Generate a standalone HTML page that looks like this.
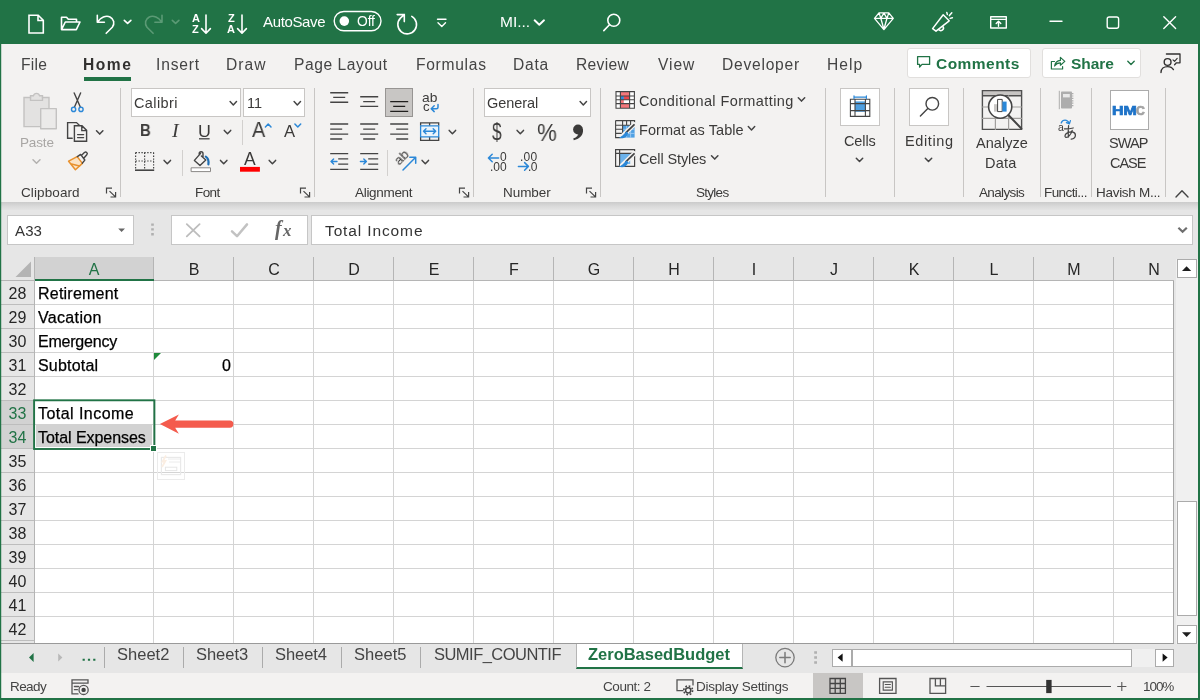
<!DOCTYPE html>
<html><head><meta charset="utf-8"><title>Excel</title>
<style>
*{box-sizing:border-box;margin:0;padding:0}
html,body{width:1200px;height:700px;overflow:hidden;background:#e6e6e6}
body{font-family:"Liberation Sans",sans-serif;color:#333;position:relative}
.a{position:absolute}
.t{position:absolute;white-space:nowrap;line-height:1;will-change:transform}
svg{position:absolute;overflow:visible}
#title{left:0;top:0;width:1200px;height:44px;background:#217346}
#tabs{left:0;top:44px;width:1200px;height:41px;background:#f3f2f1}
#ribbon{left:0;top:85px;width:1200px;height:117px;background:#f3f2f1}
#shadow{left:0;top:202px;width:1200px;height:9px;background:linear-gradient(#cbcbcb,#d9d9d9 45%,#e6e6e6)}
.tab{font-size:16.5px;color:#444;top:13px}
.gl{font-size:13.5px;color:#444;top:101px}
.sep{position:absolute;top:6px;width:1px;height:100px;background:#d2d0ce}
.rt{font-size:14.5px;color:#333}
</style></head><body>
<div id="title" class="a">
<svg style="left:0;top:0" width="1200" height="44" viewBox="0 0 1200 44" fill="none" stroke="#fff" stroke-width="1.6" stroke-linecap="round" stroke-linejoin="round">
<!-- new doc -->
<path d="M29 15.2H38.2L43.3 20.3V33H29Z M38 15.4V20.5H43" stroke-linejoin="miter"/>
<!-- open folder -->
<path d="M61.5 29.6V17.2H66.5L68.3 19.3H76.5V22 M61.5 29.6L65.3 22H80L76.3 29.6Z"/>
<!-- undo -->
<path d="M97.3 15.2V22.3H104.4 M97.6 22C100.5 17.5 106 15 110 17C114 19 115 23.5 112.3 27.2L106.2 33.3"/>
<path d="M124.3 20.3L127.6 23.4L130.9 20.3" stroke-width="1.6"/>
<!-- redo faded -->
<g stroke="#5b9a75"><path d="M162 15.2V22.3H154.9 M161.7 22C158.8 17.5 153.3 15 149.3 17C145.3 19 144.3 23.5 147 27.2L153.1 33.3"/>
<path d="M172.3 20.3L175.6 23.4L178.9 20.3" stroke-width="1.6"/></g>
<!-- AZ sort -->
<path d="M206 15V33 M201.6 28.6L206 33.2L210.4 28.6"/>
<path d="M242 15V33 M237.6 28.6L242 33.2L246.4 28.6"/>
<!-- autosave toggle -->
<rect x="334.2" y="11.5" width="46.8" height="19.2" rx="9.6" stroke-width="1.4"/>
<circle cx="344.3" cy="21.1" r="4.8" fill="#fff" stroke="none"/>
<!-- refresh -->
<path d="M411.8 16.4A9.35 9.35 0 1 1 400.4 18.1L404.3 14.6 M397.2 14.6H404.3V21.6" stroke-linejoin="miter"/>
<!-- qat customize -->
<path d="M437.5 19.2H446 M438 22.8L441.8 26.4L445.5 22.8" stroke-width="1.4"/>
<!-- MI chevron -->
<path d="M534.6 20.3L539.3 24.8L544 20.3" stroke-width="1.9"/>
<!-- search -->
<circle cx="613.8" cy="20.3" r="6" /><path d="M609.5 24.7L603.8 30.6"/>
<!-- diamond -->
<path d="M874.5 18.3L879 12.9H888.8L893.3 18.3L883.9 29.6Z M874.5 18.3H893.3 M879 12.9L880.8 18.3L883.9 29.3L887 18.3L888.8 12.9 M880.8 18.3L883.9 13L887 18.3" stroke-width="1.3"/>
<!-- megaphone -->
<path d="M932.6 28.6L943.2 14.8L949.2 20.8L936 31.2Z M938.8 29.4A2.3 2.3 0 0 0 943 26.6 M946.8 12.4L947.3 14.4 M949.4 15.6L951.8 12.8 M950.2 18.4L952.4 17.8" stroke-width="1.5"/>
<!-- ribbon display -->
<path d="M990.7 16.7H1006.3V28H990.7Z M990.7 19.4H1006.3 M998.5 26.3V21.6 M996.2 23.6L998.5 21.3L1000.8 23.6" stroke-width="1.4"/>
<!-- min max close -->
<path d="M1050 21.2H1062" stroke-width="1.4"/>
<rect x="1107.2" y="17" width="11.4" height="11.2" rx="2" stroke-width="1.4"/>
<path d="M1163.8 16.8L1175.6 28.4 M1175.6 16.8L1163.8 28.4" stroke-width="1.4"/>
</svg>
<span class="t" style="left:191.6px;top:13.2px;font-size:11px;font-weight:bold;color:#fff">A</span>
<span class="t" style="left:192.2px;top:23.7px;font-size:11px;font-weight:bold;color:#fff">Z</span>
<span class="t" style="left:227.6px;top:13.2px;font-size:11px;font-weight:bold;color:#fff">Z</span>
<span class="t" style="left:227.2px;top:23.7px;font-size:11px;font-weight:bold;color:#fff">A</span>
<span class="t" style="left:263px;top:13.6px;font-size:15px;color:#fff;letter-spacing:-0.35px">AutoSave</span>
<span class="t" style="left:357px;top:15px;font-size:13.8px;color:#fff;letter-spacing:-0.1px">Off</span>
<span class="t" style="left:499.5px;top:13.8px;font-size:15.5px;color:#fff">MI...</span>
</div>
<div id="tabs" class="a">
<span class="t" style="left:21.25px;top:12.99px;font-size:15.6px;color:#444;letter-spacing:0.250px;">File</span>
<span class="t" style="left:82.50px;top:12.99px;font-size:15.6px;color:#323130;letter-spacing:1.542px;font-weight:bold;">Home</span>
<div class="a" style="left:83.5px;top:33px;width:47px;height:3.8px;background:#217346"></div>
<span class="t" style="left:156.12px;top:12.99px;font-size:15.6px;color:#444;letter-spacing:0.835px;">Insert</span>
<span class="t" style="left:226.25px;top:12.99px;font-size:15.6px;color:#444;letter-spacing:1.017px;">Draw</span>
<span class="t" style="left:294.25px;top:12.99px;font-size:15.6px;color:#444;letter-spacing:0.562px;">Page Layout</span>
<span class="t" style="left:415.55px;top:12.99px;font-size:15.6px;color:#444;letter-spacing:0.707px;">Formulas</span>
<span class="t" style="left:512.55px;top:12.99px;font-size:15.6px;color:#444;letter-spacing:0.775px;">Data</span>
<span class="t" style="left:576.25px;top:12.99px;font-size:15.6px;color:#444;letter-spacing:0.335px;">Review</span>
<span class="t" style="left:657.88px;top:12.99px;font-size:15.6px;color:#444;letter-spacing:0.933px;">View</span>
<span class="t" style="left:721.75px;top:12.99px;font-size:15.6px;color:#444;letter-spacing:0.756px;">Developer</span>
<span class="t" style="left:826.75px;top:12.99px;font-size:15.6px;color:#444;letter-spacing:1.017px;">Help</span>
<div class="a" style="left:907px;top:4px;width:123.5px;height:29.5px;background:#fff;border:1px solid #e1dfdd;border-radius:3px"></div>
<div class="a" style="left:1042px;top:4px;width:99px;height:29.5px;background:#fff;border:1px solid #e1dfdd;border-radius:3px"></div>
<span class="t" style="left:935.88px;top:11.78px;font-size:15.5px;color:#217346;letter-spacing:0.461px;font-weight:bold;">Comments</span>
<span class="t" style="left:1071.10px;top:11.78px;font-size:15.5px;color:#217346;letter-spacing:-0.056px;font-weight:bold;">Share</span>
<svg style="left:0;top:0" width="1200" height="41" viewBox="0 44 1200 41" fill="none" stroke-linecap="round" stroke-linejoin="round">
<path d="M917.6 56.6H929.6V64.4H922L919.6 67V64.4H917.6Z" stroke="#217346" stroke-width="1.3"/>
<path d="M1054.5 61.5H1051.4V69H1062.6V66.6 M1054.6 66C1055.2 62.6 1057.6 60.6 1060.4 60.4V57.4L1064.8 61.4L1060.4 65.2V62.8C1058 62.8 1056 63.8 1054.6 66Z" stroke="#217346" stroke-width="1.2"/>
<path d="M1127.8 61.2L1131 64.4L1134.2 61.2" stroke="#217346" stroke-width="1.4"/>
<circle cx="1167.6" cy="62" r="3.4" stroke="#323130" stroke-width="1.4"/><path d="M1161 72.6C1161 68.6 1164 66.6 1167.6 66.6C1170.4 66.6 1172.4 67.8 1173.4 69.6" stroke="#323130" stroke-width="1.4"/><path d="M1166.4 54H1180V62.8H1176.4L1174.6 64.8" stroke="#323130" stroke-width="1.3"/><path d="M1173 59.8L1174.6 61.4L1177.2 58.4" stroke="#323130" stroke-width="1.1"/>
</svg>
</div>
<div id="ribbon" class="a">
<div class="a" style="left:131px;top:3px;width:110px;height:29px;background:#fff;border:1px solid #c8c6c4"></div>
<div class="a" style="left:243px;top:3px;width:62px;height:29px;background:#fff;border:1px solid #c8c6c4"></div>
<div class="a" style="left:385px;top:3px;width:28px;height:29px;background:#c8c6c4;border:1px solid #979593"></div>
<div class="a" style="left:484px;top:3px;width:107px;height:29px;background:#fff;border:1px solid #c8c6c4"></div>
<div class="a" style="left:840px;top:3px;width:40px;height:38px;background:#fff;border:1px solid #c8c6c4"></div>
<div class="a" style="left:909px;top:3px;width:40px;height:38px;background:#fff;border:1px solid #c8c6c4"></div>
<div class="a" style="left:1109.5px;top:5px;width:39.5px;height:39.5px;background:#fff;border:1px solid #ababab"></div>
<div class="a" style="left:120.0px;top:3px;width:1px;height:109px;background:#c8c6c4"></div>
<div class="a" style="left:314.0px;top:3px;width:1px;height:109px;background:#c8c6c4"></div>
<div class="a" style="left:473.0px;top:3px;width:1px;height:109px;background:#c8c6c4"></div>
<div class="a" style="left:600.0px;top:3px;width:1px;height:109px;background:#c8c6c4"></div>
<div class="a" style="left:825.0px;top:3px;width:1px;height:109px;background:#c8c6c4"></div>
<div class="a" style="left:894.0px;top:3px;width:1px;height:109px;background:#c8c6c4"></div>
<div class="a" style="left:963.0px;top:3px;width:1px;height:109px;background:#c8c6c4"></div>
<div class="a" style="left:1040.0px;top:3px;width:1px;height:109px;background:#c8c6c4"></div>
<div class="a" style="left:1091.0px;top:3px;width:1px;height:109px;background:#c8c6c4"></div>
<div class="a" style="left:1165.0px;top:3px;width:1px;height:109px;background:#c8c6c4"></div>
<div class="a" style="left:241.5px;top:34.5px;width:1px;height:25.5px;background:#d2d0ce"></div>
<div class="a" style="left:182.0px;top:64.5px;width:1px;height:26.5px;background:#d2d0ce"></div>
<div class="a" style="left:387.0px;top:64.5px;width:1px;height:26.5px;background:#d2d0ce"></div>
<svg style="left:0;top:0" width="1200" height="118" viewBox="0 85 1200 118" fill="none" stroke-linecap="round" stroke-linejoin="round">
<path d="M24 97.5H30.5V95.8H33.4A3.2 3.2 0 0 1 39.6 95.8H42.5V97.5H49V126.6H24Z" fill="#e3e2e1" stroke="#c3c2c1" stroke-width="1.4" stroke-linejoin="miter"/>
<path d="M30.5 97.5V100.4H42.5V97.5" stroke="#c3c2c1" stroke-width="1.4"/>
<rect x="40.7" y="108.6" width="15.6" height="20.2" fill="#ebeae9" stroke="#c3c2c1" stroke-width="1.4"/>
<path d="M33.0 159.79999999999998L36.5 163.2L40.0 159.79999999999998" stroke="#b3b1af" stroke-width="1.5"/>
<path d="M74.2 93L80.2 106.8 M80.6 93L74.6 106.8" stroke="#444" stroke-width="1.4"/>
<circle cx="73.6" cy="109.4" r="2.1" stroke="#2b88d8" stroke-width="1.4"/><circle cx="81" cy="109.4" r="2.1" stroke="#2b88d8" stroke-width="1.4"/>
<path d="M72.2 138.2H67.6V122.6H76.5L79.3 125.2" stroke="#444" stroke-width="1.4" stroke-linejoin="miter"/>
<path d="M74.4 125.8H82L86.6 130.4V141.2H74.4Z M81.8 126V130.6H86.4 M77.6 134.6H83.6 M77.6 137.6H83.6" stroke="#444" stroke-width="1.4" stroke-linejoin="miter"/>
<path d="M96.5 130.79999999999998L99.7 134.1L102.9 130.79999999999998" stroke="#444" stroke-width="1.5"/>
<path d="M68.6 161.2L77.2 156.6L82.4 163.4L75.4 169.8Z" fill="#fbe3c5" stroke="#e8912d" stroke-width="1.5"/>
<path d="M71.5 164L79.5 166" stroke="#e8912d" stroke-width="1.3"/>
<path d="M77.4 156.6L80.6 154.4L84.8 160L82.4 163.2 M81.6 155.2L84.4 152.6A1.6 1.6 0 0 1 86.8 154.8L84.2 157.8" stroke="#444" stroke-width="1.4"/>
<path d="M106.5 193.6V188.1H112 M109.5 191.1L115.5 196.9 M115.6 191.9V197.0H110.5" stroke="#444" stroke-width="1.2" stroke-linecap="butt" stroke-linejoin="miter"/>
<path d="M230.10000000000002 101.60000000000001L233.3 104.9L236.50000000000003 101.60000000000001" stroke="#444" stroke-width="1.5"/>
<path d="M294.1 101.60000000000001L297.3 104.9L300.5 101.60000000000001" stroke="#444" stroke-width="1.5"/>
<path d="M199 138.8H209.6" stroke="#444" stroke-width="1.3" stroke-linecap="butt"/>
<path d="M224.3 130.39999999999998L227.5 133.7L230.70000000000002 130.39999999999998" stroke="#444" stroke-width="1.5"/>
<path d="M265.4 127L268.2 124L271 127" stroke="#2b88d8" stroke-width="1.5"/>
<path d="M294.9 124L297.8 127L300.7 124" stroke="#2b88d8" stroke-width="1.5"/>
<path d="M135.6 152.6H153.6 M135.6 161H153.6 M135.6 152.6V169 M144.6 152.6V169 M153.6 152.6V169" stroke="#444" stroke-width="1.2" stroke-dasharray="1.4 1.5" stroke-linecap="butt"/>
<path d="M135 170.2H154.2" stroke="#444" stroke-width="1.6" stroke-linecap="butt"/>
<path d="M164.10000000000002 160.39999999999998L167.3 163.7L170.50000000000003 160.39999999999998" stroke="#444" stroke-width="1.5"/>
<path d="M200.6 153.4L194.4 160.4L200 165.4L205.8 160L201.4 156 M199.2 155V153.6A1.9 1.9 0 0 1 203 153.6V157.4" stroke="#444" stroke-width="1.4"/>
<path d="M205.8 156.6C208.2 158 208.8 161 208.4 164.4" stroke="#1f6fb5" stroke-width="2.2"/>
<rect x="191.5" y="167.8" width="19" height="3.8" fill="#fff" stroke="#8a8886" stroke-width="1"/>
<path d="M220.5 160.39999999999998L223.7 163.7L226.9 160.39999999999998" stroke="#444" stroke-width="1.5"/>
<rect x="240" y="166.9" width="19.9" height="4.8" fill="#ff0000"/>
<path d="M269.2 160.39999999999998L272.4 163.7L275.59999999999997 160.39999999999998" stroke="#444" stroke-width="1.5"/>
<path d="M300.5 193.6V188.1H306 M303.5 191.1L309.5 196.9 M309.6 191.9V197.0H304.5" stroke="#444" stroke-width="1.2" stroke-linecap="butt" stroke-linejoin="miter"/>
<path d="M330.2 92.8H348.2 M333.2 97.4H345.2 M330.2 102.2H348.2 " stroke="#444" stroke-width="1.4" stroke-linecap="butt"/>
<path d="M360.2 96.8H378.2 M363.2 101.6H375.2 M360.2 106.4H378.2 " stroke="#444" stroke-width="1.4" stroke-linecap="butt"/>
<path d="M390.2 101.6H408.2 M393.2 106.4H405.2 M390.2 111.4H408.2 " stroke="#201f1e" stroke-width="1.4" stroke-linecap="butt"/>
<path d="M330.2 124H348.2 M330.2 129.1H342.2 M330.2 134.1H348.2 M330.2 139H342.2 " stroke="#444" stroke-width="1.4" stroke-linecap="butt"/>
<path d="M360.2 124H378.2 M363.2 129.1H375.2 M360.2 134.1H378.2 M363.2 139H375.2 " stroke="#444" stroke-width="1.4" stroke-linecap="butt"/>
<path d="M390.2 124H408.2 M396.2 129.1H408.2 M390.2 134.1H408.2 M396.2 139H408.2 " stroke="#444" stroke-width="1.4" stroke-linecap="butt"/>
<path d="M330.2 153.6H348.2 M338.2 158.9H348.2 M338.2 164.1H348.2 M330.2 169.4H348.2 " stroke="#444" stroke-width="1.4" stroke-linecap="butt"/>
<path d="M337 161.5H331 M333.6 158.9L331 161.5L333.6 164.1" stroke="#2b88d8" stroke-width="1.4"/>
<path d="M360.2 153.6H378.2 M368.2 158.9H378.2 M368.2 164.1H378.2 M360.2 169.4H378.2 " stroke="#444" stroke-width="1.4" stroke-linecap="butt"/>
<path d="M360.4 161.5H366.4 M363.8 158.9L366.4 161.5L363.8 164.1" stroke="#2b88d8" stroke-width="1.4"/>
<path d="M438 104.5V107.2A1.5 1.5 0 0 1 436.5 108.7H431.4 M434.2 105.8L431.2 108.7L434.2 111.6" stroke="#2b88d8" stroke-width="1.5"/>
<path d="M420.6 125.8V122.9H438.7V125.8 M420.6 136.8V140.3H438.7V136.8 M429.6 122.9V125.8 M429.6 136.8V140.3" stroke="#444" stroke-width="1.3" stroke-linejoin="miter" stroke-linecap="butt"/>
<rect x="420.6" y="125.8" width="18.1" height="11" fill="#eaf4fc" stroke="#2b88d8" stroke-width="1.3"/>
<path d="M423.6 131.3H435.6 M426 128.8L423.5 131.3L426 133.8 M433.2 128.8L435.7 131.3L433.2 133.8" stroke="#2b88d8" stroke-width="1.4"/>
<path d="M449.2 130.39999999999998L452.4 133.7L455.59999999999997 130.39999999999998" stroke="#444" stroke-width="1.5"/>
<path d="M403 170L415.2 157.8 M409.8 157.3H415.7V163.2" stroke="#2b88d8" stroke-width="1.5"/>
<path d="M422.1 160.39999999999998L425.3 163.7L428.5 160.39999999999998" stroke="#444" stroke-width="1.5"/>
<path d="M459.5 193.6V188.1H465 M462.5 191.1L468.5 196.9 M468.6 191.9V197.0H463.5" stroke="#444" stroke-width="1.2" stroke-linecap="butt" stroke-linejoin="miter"/>
<path d="M580.0999999999999 101.60000000000001L583.3 104.9L586.4999999999999 101.60000000000001" stroke="#444" stroke-width="1.5"/>
<path d="M517.0999999999999 130.39999999999998L520.3 133.7L523.4999999999999 130.39999999999998" stroke="#444" stroke-width="1.5"/>
<circle cx="578" cy="129.5" r="4.9" fill="#3b3a39" stroke="none"/><path d="M582.9 129C583.8 134.8 580 138.8 573.8 140.2L573.2 138.4C576.8 137.2 578.8 135 578.4 132.4Z" fill="#3b3a39" stroke="none"/>
<path d="M498.6 158H488.4 M492.2 154.2L488.4 158L492.2 161.8" stroke="#2b88d8" stroke-width="1.5"/>
<path d="M518.4 166.4H528.4 M524.6 162.6L528.4 166.4L524.6 170.2" stroke="#2b88d8" stroke-width="1.5"/>
<path d="M586.5 193.6V188.1H592 M589.5 191.1L595.5 196.9 M595.6 191.9V197.0H590.5" stroke="#444" stroke-width="1.2" stroke-linecap="butt" stroke-linejoin="miter"/>
<rect x="616" y="91.6" width="18.4" height="16.6" fill="#fff" stroke="none"/>
<path d="M620.4 91.8H629.6V96H620.4Z M620.4 103.6H629.6V108H620.4Z M620.4 96H623.8V103.6H620.4Z" fill="#f4777b" stroke="none"/>
<path d="M623.8 96H629.6V99.8H623.8Z" fill="#e8464c" stroke="none"/><path d="M620.4 96H623.8V99.8H620.4Z" fill="#2b88d8" stroke="none"/>
<path d="M616 91.6H634.4V108.2H616Z M620.4 91.6V108.2 M629.6 91.6V108.2 M616 96H634.4 M616 99.8H634.4 M616 103.6H634.4" stroke="#444" stroke-width="1.1" stroke-linejoin="miter"/>
<path d="M798.3 97.8L801.5 101.1L804.6999999999999 97.8" stroke="#444" stroke-width="1.5"/>
<rect x="622.6" y="125.2" width="12" height="12.4" fill="#4fa0e3" stroke="none"/>
<path d="M626.6 125.2V137.6 M630.6 125.2V137.6 M622.6 129.3H634.6 M622.6 133.4H634.6" stroke="#9fcbf0" stroke-width="0.9"/>
<path d="M615.6 120.6H634.6V125.2 M615.6 120.6V137.6H622.6 M622.6 120.6V125.2 M626.6 120.6V125.2 M630.6 120.6V125.2 M615.6 125.2H634.6 M615.6 129.3H622.6 M615.6 133.4H622.6 M622.6 125.2V137.6" stroke="#444" stroke-width="1.1" stroke-linejoin="miter" stroke-linecap="butt"/>
<path d="M634.4 124.4L622 136.4" stroke="#f3f2f1" stroke-width="4.4"/><path d="M634 124.8L626 132.6" stroke="#444" stroke-width="1.8"/><path d="M626.6 131.6C624.6 132.6 623.6 136.2 618.8 137.6C622.4 139.4 627 138 628.2 133.2Z" fill="#2b88d8" stroke="none"/>
<path d="M748.3 126.60000000000001L751.5 129.9L754.6999999999999 126.60000000000001" stroke="#444" stroke-width="1.5"/>
<rect x="619.8" y="153.4" width="10.4" height="10.6" fill="#6db3ec" stroke="none"/>
<path d="M615.6 149.6H634.6V166.4H615.6Z M615.6 153.4H634.6 M619.6 149.6V166.4" stroke="#444" stroke-width="1.2" stroke-linejoin="miter"/>
<path d="M634.4 153.4L622 165.4" stroke="#f3f2f1" stroke-width="4.4"/><path d="M634 153.8L626 161.6" stroke="#444" stroke-width="1.8"/><path d="M626.6 160.6C624.6 161.6 623.6 165.2 618.8 166.6C622.4 168.4 627 167 628.2 162.2Z" fill="#2b88d8" stroke="none"/>
<path d="M711.5 155.79999999999998L714.7 159.1L717.9 155.79999999999998" stroke="#444" stroke-width="1.5"/>
<rect x="855" y="101.4" width="10.4" height="10.4" fill="#4f9fe0" stroke="none"/>
<path d="M850.4 99.2H869.8V116.4H850.4Z M850.4 103.6H869.8 M850.4 110.6H869.8 M855 99.2V116.4 M865.4 99.2V116.4" stroke="#444" stroke-width="1.1" stroke-linejoin="miter"/>
<path d="M854 97.2H866.4 M854 95.8V98.6 M866.4 95.8V98.6" stroke="#2b88d8" stroke-width="1.2"/>
<path d="M856.3 158.2L859.5 161.5L862.6999999999999 158.2" stroke="#444" stroke-width="1.5"/>
<circle cx="932.3" cy="103.8" r="6.3" stroke="#444" stroke-width="1.4"/><path d="M927.8 108.4L920.4 116" stroke="#444" stroke-width="1.4"/>
<path d="M925.3 158.2L928.5 161.5L931.6999999999999 158.2" stroke="#444" stroke-width="1.5"/>
<rect x="982.4" y="90.6" width="39.2" height="5.2" fill="#c8c6c4" stroke="none"/>
<path d="M982.4 90.6H1021.6V129.4H982.4Z M982.4 95.8H1021.6" stroke="#505050" stroke-width="1.4" stroke-linejoin="miter"/>
<path d="M982.4 107H1021.6 M982.4 118.4H1021.6 M995.4 95.8V129.4 M1008.6 95.8V129.4" stroke="#a19f9d" stroke-width="1.2"/>
<circle cx="1000.2" cy="106.6" r="11.6" fill="#fff" stroke="#444" stroke-width="1.6"/>
<rect x="994" y="104.2" width="4" height="7.4" fill="#c8c6c4"/><rect x="998" y="99.4" width="4.2" height="12.2" fill="#fff" stroke="#444" stroke-width="1"/><rect x="1002.4" y="101.6" width="4.2" height="10" fill="#2b88d8"/>
<path d="M1008.6 115.2L1021.4 128.6" stroke="#444" stroke-width="2"/>
<rect x="1061" y="91.4" width="11" height="17.2" rx="0.8" fill="#adadad" stroke="none"/><rect x="1063" y="94" width="6.8" height="3.4" fill="#e9e9e9" stroke="none"/><path d="M1059.3 91.2V108.8" stroke="#adadad" stroke-width="1"/><path d="M1072.6 93V107.4" stroke="#adadad" stroke-width="1.6" stroke-dasharray="1.2 1.2" stroke-linecap="butt"/>
<path d="M1061.2 123C1062.6 119.4 1067.4 119 1069.2 123.4 M1070.4 120.6L1069.4 123.8L1066.4 122.6" stroke="#2b88d8" stroke-width="1.3"/>
<g transform="translate(1063.8 125.4)" stroke="#444" stroke-width="1.25"><path d="M0.6 3.4C3.5 3.6 6.5 3.2 9.4 2.6 M4.8 0.2C4.4 4 4.2 8 4.6 11.6 M8.4 5C7.5 9 4 12.6 2 12C0.5 11.5 1 8.5 4 7.2C7.5 5.8 11.6 6.5 11.6 9.8C11.6 12 9.5 13.4 7.4 13.8"/></g>
<path d="M1176 197L1182 190.8L1188 197" stroke="#444" stroke-width="1.4"/>
</svg>
<span class="t" style="left:19.77px;top:51.07px;font-size:13.5px;color:#a8a6a4;letter-spacing:-0.137px;">Paste</span>
<span class="t" style="left:20.77px;top:100.97px;font-size:13.5px;color:#3b3a39;letter-spacing:0.106px;">Clipboard</span>
<span class="t" style="left:133.85px;top:10.83px;font-size:14.5px;color:#3b3a39;letter-spacing:0.388px;">Calibri</span>
<span class="t" style="left:246.57px;top:10.83px;font-size:14.5px;color:#3b3a39;letter-spacing:-0.050px;">11</span>
<span class="t" style="left:139.67px;top:38.36px;font-size:16px;color:#3b3a39;font-weight:bold;transform:scaleX(0.9316);transform-origin:0 0;">B</span>
<span class="t" style="left:171.54px;top:36.74px;font-size:18.5px;color:#3b3a39;font-style:italic;font-family:'Liberation Serif',serif;transform:scaleX(1.0857);transform-origin:0 0;">I</span>
<span class="t" style="left:197.82px;top:38.19px;font-size:16.2px;color:#3b3a39;transform:scaleX(1.1027);transform-origin:0 0;">U</span>
<span class="t" style="left:252.40px;top:34.37px;font-size:22.6px;color:#3b3a39;transform:scaleX(0.8800);transform-origin:0 0;">A</span>
<span class="t" style="left:284.40px;top:39.45px;font-size:16.6px;color:#3b3a39;transform:scaleX(0.9636);transform-origin:0 0;">A</span>
<span class="t" style="left:243.60px;top:65.89px;font-size:17.5px;color:#3b3a39;">A</span>
<span class="t" style="left:194.57px;top:100.97px;font-size:13.5px;color:#3b3a39;letter-spacing:-0.583px;">Font</span>
<span class="t" style="left:422.48px;top:5.73px;font-size:13.2px;color:#3b3a39;transform:scaleX(1.0473);transform-origin:0 0;">ab</span>
<span class="t" style="left:422.91px;top:14.93px;font-size:13.2px;color:#3b3a39;transform:scaleX(0.9739);transform-origin:0 0;">c</span>
<span class="t" style="left:400.6px;top:69.4px;font-size:13.6px;color:#3b3a39;transform:rotate(-45deg);transform-origin:0 100%">ab</span>
<span class="t" style="left:355.40px;top:100.97px;font-size:13.5px;color:#3b3a39;letter-spacing:-0.309px;">Alignment</span>
<span class="t" style="left:486.95px;top:10.83px;font-size:14.5px;color:#3b3a39;letter-spacing:-0.062px;">General</span>
<span class="t" style="left:492.41px;top:35.93px;font-size:23px;color:#3b3a39;transform:scaleX(0.7588);transform-origin:0 0;">$</span>
<span class="t" style="left:536.99px;top:36.08px;font-size:24px;color:#3b3a39;transform:scaleX(0.9274);transform-origin:0 0;">%</span>
<span class="t" style="left:500.30px;top:65.94px;font-size:12px;color:#3b3a39;">0</span>
<span class="t" style="left:490.48px;top:75.94px;font-size:12px;color:#3b3a39;letter-spacing:0.037px;">.00</span>
<span class="t" style="left:520.48px;top:65.94px;font-size:12px;color:#3b3a39;letter-spacing:0.238px;">.00</span>
<span class="t" style="left:528.27px;top:75.94px;font-size:12px;color:#3b3a39;letter-spacing:-0.700px;">.0</span>
<span class="t" style="left:502.68px;top:100.97px;font-size:13.5px;color:#3b3a39;letter-spacing:-0.045px;">Number</span>
<span class="t" style="left:638.85px;top:8.83px;font-size:14.5px;color:#3b3a39;letter-spacing:0.402px;">Conditional Formatting</span>
<span class="t" style="left:638.88px;top:37.63px;font-size:14.5px;color:#3b3a39;letter-spacing:0.066px;">Format as Table</span>
<span class="t" style="left:638.85px;top:66.73px;font-size:14.5px;color:#3b3a39;letter-spacing:-0.115px;">Cell Styles</span>
<span class="t" style="left:695.88px;top:100.97px;font-size:13.5px;color:#3b3a39;letter-spacing:-0.725px;">Styles</span>
<span class="t" style="left:843.55px;top:48.53px;font-size:14.5px;color:#3b3a39;letter-spacing:-0.125px;">Cells</span>
<span class="t" style="left:904.58px;top:48.53px;font-size:14.5px;color:#3b3a39;letter-spacing:0.608px;">Editing</span>
<span class="t" style="left:976.30px;top:50.73px;font-size:14.5px;color:#3b3a39;letter-spacing:0.038px;">Analyze</span>
<span class="t" style="left:985.48px;top:70.53px;font-size:14.5px;color:#3b3a39;letter-spacing:0.258px;">Data</span>
<span class="t" style="left:979.00px;top:100.97px;font-size:13.5px;color:#3b3a39;letter-spacing:-0.636px;">Analysis</span>
<span class="t" style="left:1043.88px;top:100.97px;font-size:13.5px;color:#3b3a39;letter-spacing:-0.578px;">Functi...</span>
<span class="t" style="left:1112.02px;top:19.57px;font-size:12.2px;color:#1e73c8;font-weight:bold;transform:scaleX(1.3029);transform-origin:0 0;-webkit-text-stroke:0.7px #1e73c8;">HM</span>
<span class="t" style="left:1136.30px;top:19.57px;font-size:12.2px;color:#a3a3a3;font-weight:bold;transform:scaleX(1.0000);transform-origin:0 0;-webkit-text-stroke:0.7px #a3a3a3;">C</span>
<span class="t" style="left:1109.08px;top:50.73px;font-size:14.5px;color:#3b3a39;letter-spacing:-0.917px;">SWAP</span>
<span class="t" style="left:1110.25px;top:70.53px;font-size:14.5px;color:#3b3a39;letter-spacing:-1.042px;">CASE</span>
<span class="t" style="left:1095.67px;top:100.97px;font-size:13.5px;color:#3b3a39;letter-spacing:-0.292px;">Havish M...</span>
<span class="t" style="left:1057.62px;top:37.21px;font-size:10.5px;color:#3b3a39;">a</span>
</div>
<div id="shadow" class="a"></div>
<div id="fbar" class="a" style="left:0;top:210px;width:1200px;height:47px;background:#e6e6e6">
<div class="a" style="left:7px;top:5px;width:127px;height:29.599999999999994px;background:#fff;border:1px solid #c6c6c6"></div>
<div class="a" style="left:171px;top:5px;width:137px;height:29.599999999999994px;background:#fff;border:1px solid #c6c6c6"></div>
<div class="a" style="left:311px;top:5px;width:882px;height:29.599999999999994px;background:#fff;border:1px solid #c6c6c6"></div>
<span class="t" style="left:15.20px;top:13.20px;font-size:15px;color:#333;letter-spacing:0.137px;">A33</span>
<span class="t" style="left:325.23px;top:12.78px;font-size:15.5px;color:#333;letter-spacing:0.875px;">Total Income</span>
<span class="t" style="left:275.35px;top:7.80px;font-size:20px;color:#666;font-style:italic;font-family:'Liberation Serif',serif;font-weight:bold;">f</span>
<span class="t" style="left:282.85px;top:11.79px;font-size:17px;color:#666;font-style:italic;font-family:'Liberation Serif',serif;font-weight:bold;">x</span>
<svg style="left:0;top:0" width="1200" height="47" viewBox="0 210 1200 47" fill="none" stroke-linecap="round" stroke-linejoin="round">
<path d="M118.2 228.4H125L121.6 232Z" fill="#666" stroke="none"/>
<path d="M151.2 223.4h2.6v2.4h-2.6z M151.2 228.2h2.6v2.4h-2.6z M151.2 233h2.6v2.4h-2.6z" fill="#b0b0b0" stroke="none"/>
<path d="M186.8 224.2L199.6 236.4 M199.6 224.2L186.8 236.4" stroke="#bdbdbd" stroke-width="1.8"/>
<path d="M232 231.4L237 236.2L247 224.4" stroke="#c2c2c2" stroke-width="2.5"/>
<path d="M1178.4 227.8L1182.6 231.8L1186.8 227.8" stroke="#6e6e6e" stroke-width="2.2" stroke-linejoin="miter" stroke-linecap="butt"/>
</svg>
</div>
<div id="grid" class="a" style="left:0;top:257px;width:1200px;height:387px;background:#e6e6e6">
<div class="a" style="left:35px;top:24px;width:1139px;height:362px;background:#fff"></div>
<div class="a" style="left:153px;top:24px;width:1px;height:362px;background:#d4d4d4"></div>
<div class="a" style="left:233px;top:24px;width:1px;height:362px;background:#d4d4d4"></div>
<div class="a" style="left:313px;top:24px;width:1px;height:362px;background:#d4d4d4"></div>
<div class="a" style="left:393px;top:24px;width:1px;height:362px;background:#d4d4d4"></div>
<div class="a" style="left:473px;top:24px;width:1px;height:362px;background:#d4d4d4"></div>
<div class="a" style="left:553px;top:24px;width:1px;height:362px;background:#d4d4d4"></div>
<div class="a" style="left:633px;top:24px;width:1px;height:362px;background:#d4d4d4"></div>
<div class="a" style="left:713px;top:24px;width:1px;height:362px;background:#d4d4d4"></div>
<div class="a" style="left:793px;top:24px;width:1px;height:362px;background:#d4d4d4"></div>
<div class="a" style="left:873px;top:24px;width:1px;height:362px;background:#d4d4d4"></div>
<div class="a" style="left:953px;top:24px;width:1px;height:362px;background:#d4d4d4"></div>
<div class="a" style="left:1033px;top:24px;width:1px;height:362px;background:#d4d4d4"></div>
<div class="a" style="left:1113px;top:24px;width:1px;height:362px;background:#d4d4d4"></div>
<div class="a" style="left:35px;top:47px;width:1139px;height:1px;background:#d4d4d4"></div>
<div class="a" style="left:35px;top:71px;width:1139px;height:1px;background:#d4d4d4"></div>
<div class="a" style="left:35px;top:95px;width:1139px;height:1px;background:#d4d4d4"></div>
<div class="a" style="left:35px;top:119px;width:1139px;height:1px;background:#d4d4d4"></div>
<div class="a" style="left:35px;top:143px;width:1139px;height:1px;background:#d4d4d4"></div>
<div class="a" style="left:35px;top:167px;width:1139px;height:1px;background:#d4d4d4"></div>
<div class="a" style="left:35px;top:191px;width:1139px;height:1px;background:#d4d4d4"></div>
<div class="a" style="left:35px;top:215px;width:1139px;height:1px;background:#d4d4d4"></div>
<div class="a" style="left:35px;top:239px;width:1139px;height:1px;background:#d4d4d4"></div>
<div class="a" style="left:35px;top:263px;width:1139px;height:1px;background:#d4d4d4"></div>
<div class="a" style="left:35px;top:287px;width:1139px;height:1px;background:#d4d4d4"></div>
<div class="a" style="left:35px;top:311px;width:1139px;height:1px;background:#d4d4d4"></div>
<div class="a" style="left:35px;top:335px;width:1139px;height:1px;background:#d4d4d4"></div>
<div class="a" style="left:35px;top:359px;width:1139px;height:1px;background:#d4d4d4"></div>
<div class="a" style="left:1px;top:47px;width:33px;height:1px;background:#bdbdbd"></div>
<div class="a" style="left:1px;top:71px;width:33px;height:1px;background:#bdbdbd"></div>
<div class="a" style="left:1px;top:95px;width:33px;height:1px;background:#bdbdbd"></div>
<div class="a" style="left:1px;top:119px;width:33px;height:1px;background:#bdbdbd"></div>
<div class="a" style="left:1px;top:143px;width:33px;height:1px;background:#bdbdbd"></div>
<div class="a" style="left:1px;top:167px;width:33px;height:1px;background:#bdbdbd"></div>
<div class="a" style="left:1px;top:191px;width:33px;height:1px;background:#bdbdbd"></div>
<div class="a" style="left:1px;top:215px;width:33px;height:1px;background:#bdbdbd"></div>
<div class="a" style="left:1px;top:239px;width:33px;height:1px;background:#bdbdbd"></div>
<div class="a" style="left:1px;top:263px;width:33px;height:1px;background:#bdbdbd"></div>
<div class="a" style="left:1px;top:287px;width:33px;height:1px;background:#bdbdbd"></div>
<div class="a" style="left:1px;top:311px;width:33px;height:1px;background:#bdbdbd"></div>
<div class="a" style="left:1px;top:335px;width:33px;height:1px;background:#bdbdbd"></div>
<div class="a" style="left:1px;top:359px;width:33px;height:1px;background:#bdbdbd"></div>
<div class="a" style="left:1px;top:383px;width:33px;height:1px;background:#bdbdbd"></div>
<div class="a" style="left:1px;top:144px;width:33px;height:47px;background:#d2d2d2"></div>
<div class="a" style="left:1px;top:167px;width:32px;height:1px;background:#bdbdbd"></div>
<div class="a" style="left:34px;top:24px;width:1px;height:362px;background:#b5b5b5"></div>
<div class="a" style="left:35px;top:0;width:118px;height:23px;background:#d2d2d2"></div>
<div class="a" style="left:34px;top:0;width:1px;height:23px;background:#b5b5b5"></div>
<div class="a" style="left:153px;top:0;width:1px;height:23px;background:#b5b5b5"></div>
<div class="a" style="left:233px;top:0;width:1px;height:23px;background:#b5b5b5"></div>
<div class="a" style="left:313px;top:0;width:1px;height:23px;background:#b5b5b5"></div>
<div class="a" style="left:393px;top:0;width:1px;height:23px;background:#b5b5b5"></div>
<div class="a" style="left:473px;top:0;width:1px;height:23px;background:#b5b5b5"></div>
<div class="a" style="left:553px;top:0;width:1px;height:23px;background:#b5b5b5"></div>
<div class="a" style="left:633px;top:0;width:1px;height:23px;background:#b5b5b5"></div>
<div class="a" style="left:713px;top:0;width:1px;height:23px;background:#b5b5b5"></div>
<div class="a" style="left:793px;top:0;width:1px;height:23px;background:#b5b5b5"></div>
<div class="a" style="left:873px;top:0;width:1px;height:23px;background:#b5b5b5"></div>
<div class="a" style="left:953px;top:0;width:1px;height:23px;background:#b5b5b5"></div>
<div class="a" style="left:1033px;top:0;width:1px;height:23px;background:#b5b5b5"></div>
<div class="a" style="left:1113px;top:0;width:1px;height:23px;background:#b5b5b5"></div>
<div class="a" style="left:1px;top:23px;width:1173px;height:1px;background:#b5b5b5"></div>
<div class="a" style="left:35px;top:22px;width:119px;height:2px;background:#217346"></div>
<div class="a" style="left:1173px;top:24px;width:1px;height:363px;background:#a6a6a6"></div>
<div class="a" style="left:1px;top:386px;width:1173px;height:1px;background:#9a9a9a"></div>
<svg style="left:15px;top:4px" width="17" height="17"><path d="M16 0.5V16H0.5Z" fill="#b4b4b4"/></svg>
<span class="t" style="left:73.5px;width:40px;text-align:center;top:4.5px;font-size:16px;color:#217346">A</span>
<span class="t" style="left:173.5px;width:40px;text-align:center;top:4.5px;font-size:16px;color:#262626">B</span>
<span class="t" style="left:253.5px;width:40px;text-align:center;top:4.5px;font-size:16px;color:#262626">C</span>
<span class="t" style="left:333.5px;width:40px;text-align:center;top:4.5px;font-size:16px;color:#262626">D</span>
<span class="t" style="left:413.5px;width:40px;text-align:center;top:4.5px;font-size:16px;color:#262626">E</span>
<span class="t" style="left:493.5px;width:40px;text-align:center;top:4.5px;font-size:16px;color:#262626">F</span>
<span class="t" style="left:573.5px;width:40px;text-align:center;top:4.5px;font-size:16px;color:#262626">G</span>
<span class="t" style="left:653.5px;width:40px;text-align:center;top:4.5px;font-size:16px;color:#262626">H</span>
<span class="t" style="left:733.5px;width:40px;text-align:center;top:4.5px;font-size:16px;color:#262626">I</span>
<span class="t" style="left:813.5px;width:40px;text-align:center;top:4.5px;font-size:16px;color:#262626">J</span>
<span class="t" style="left:893.5px;width:40px;text-align:center;top:4.5px;font-size:16px;color:#262626">K</span>
<span class="t" style="left:973.5px;width:40px;text-align:center;top:4.5px;font-size:16px;color:#262626">L</span>
<span class="t" style="left:1053.5px;width:40px;text-align:center;top:4.5px;font-size:16px;color:#262626">M</span>
<span class="t" style="left:1133.5px;width:40px;text-align:center;top:4.5px;font-size:16px;color:#262626">N</span>
<span class="t" style="left:1px;width:33px;text-align:center;top:28.5px;font-size:16px;color:#262626">28</span>
<span class="t" style="left:1px;width:33px;text-align:center;top:52.5px;font-size:16px;color:#262626">29</span>
<span class="t" style="left:1px;width:33px;text-align:center;top:76.5px;font-size:16px;color:#262626">30</span>
<span class="t" style="left:1px;width:33px;text-align:center;top:100.5px;font-size:16px;color:#262626">31</span>
<span class="t" style="left:1px;width:33px;text-align:center;top:124.5px;font-size:16px;color:#262626">32</span>
<span class="t" style="left:1px;width:33px;text-align:center;top:148.5px;font-size:16px;color:#217346">33</span>
<span class="t" style="left:1px;width:33px;text-align:center;top:172.5px;font-size:16px;color:#217346">34</span>
<span class="t" style="left:1px;width:33px;text-align:center;top:196.5px;font-size:16px;color:#262626">35</span>
<span class="t" style="left:1px;width:33px;text-align:center;top:220.5px;font-size:16px;color:#262626">36</span>
<span class="t" style="left:1px;width:33px;text-align:center;top:244.5px;font-size:16px;color:#262626">37</span>
<span class="t" style="left:1px;width:33px;text-align:center;top:268.5px;font-size:16px;color:#262626">38</span>
<span class="t" style="left:1px;width:33px;text-align:center;top:292.5px;font-size:16px;color:#262626">39</span>
<span class="t" style="left:1px;width:33px;text-align:center;top:316.5px;font-size:16px;color:#262626">40</span>
<span class="t" style="left:1px;width:33px;text-align:center;top:340.5px;font-size:16px;color:#262626">41</span>
<span class="t" style="left:1px;width:33px;text-align:center;top:364.5px;font-size:16px;color:#262626">42</span>
<div class="a" style="left:36px;top:167px;width:116px;height:23px;background:#d2d2d2"></div>
<span class="t" style="left:37.8px;top:28.5px;font-size:16px;color:#000;letter-spacing:0.23px;-webkit-text-stroke:0.25px #000">Retirement</span>
<span class="t" style="left:37.8px;top:52.5px;font-size:16px;color:#000;letter-spacing:0.33px;-webkit-text-stroke:0.25px #000">Vacation</span>
<span class="t" style="left:37.8px;top:76.5px;font-size:16px;color:#000;letter-spacing:-0.22px;-webkit-text-stroke:0.25px #000">Emergency</span>
<span class="t" style="left:37.8px;top:100.5px;font-size:16px;color:#000;letter-spacing:0.2px;-webkit-text-stroke:0.25px #000">Subtotal</span>
<span class="t" style="right:969px;top:100.5px;font-size:16px;color:#000;-webkit-text-stroke:0.25px #000">0</span>
<span class="t" style="left:37.8px;top:148.5px;font-size:16px;color:#000;letter-spacing:0.45px;-webkit-text-stroke:0.25px #000">Total Income</span>
<span class="t" style="left:37.8px;top:172.5px;font-size:16px;color:#000;letter-spacing:-0.05px;-webkit-text-stroke:0.25px #000">Total Expenses</span>
<svg style="left:154px;top:96px" width="8" height="8"><path d="M0 0H7L0 7Z" fill="#1f8a3b"/></svg>
<svg style="left:0;top:0" width="200" height="220" viewBox="0 257 200 220"><rect x="34.1" y="400.3" width="120.3" height="48.7" fill="none" stroke="#217346" stroke-width="1.9"/></svg>
<div class="a" style="left:150.3px;top:188.3px;width:7px;height:7px;background:#217346;border:1px solid #fff"></div>
<svg style="left:0;top:0" width="260" height="220" viewBox="0 257 260 220"><path d="M159.9 424.1L178.9 414.4L175.2 420.5H229.8A3.6 3.6 0 0 1 229.8 427.7H175.2L178.9 433.7Z" fill="#f45b4d"/></svg>
<svg style="left:0;top:0" width="260" height="240" viewBox="0 257 260 240" fill="none"><rect x="157.5" y="452.5" width="27" height="27" stroke="#ebebeb" stroke-width="1"/><rect x="161.4" y="457.4" width="19.2" height="17.2" stroke="#e9e9e9" stroke-width="1.2"/><path d="M168 459H180 M169 462H180" stroke="#ececec" stroke-width="1"/><rect x="165.4" y="467.2" width="11.4" height="3.4" stroke="#e6e6e6" stroke-width="1"/><path d="M166 455.5L162.6 461.5L165.4 461L162 467" stroke="#fbeee2" stroke-width="1.8"/></svg>
<div class="a" style="left:1176px;top:2px;width:21.5px;height:385px;background:#f0f0f0"></div>
<div class="a" style="left:1177px;top:2px;width:20px;height:19px;background:#fff;border:1px solid #ababab"></div>
<svg style="left:1181.6px;top:8.6px" width="12" height="7"><path d="M0 5L4.6 0.2L9.2 5Z" fill="#1e1e1e"/></svg>
<div class="a" style="left:1177px;top:244px;width:20px;height:115px;background:#fff;border:1px solid #ababab"></div>
<div class="a" style="left:1177px;top:368px;width:20px;height:19px;background:#fff;border:1px solid #ababab"></div>
<svg style="left:1181.6px;top:375px" width="12" height="7"><path d="M0 0.2L4.6 5L9.2 0.2Z" fill="#1e1e1e"/></svg>
</div>
<div id="sheets" class="a" style="left:0;top:644px;width:1200px;height:29px;background:#e6e6e6">
<div class="a" style="left:576px;top:0;width:166.5px;height:24.8px;background:#fff;border-left:1px solid #b5b5b5;border-right:1px solid #b5b5b5;border-bottom:2.4px solid #217346"></div>
<span class="t" style="left:116.75px;top:1.93px;font-size:16.5px;color:#444;letter-spacing:0.010px;">Sheet2</span>
<span class="t" style="left:196.05px;top:1.93px;font-size:16.5px;color:#444;letter-spacing:-0.035px;">Sheet3</span>
<span class="t" style="left:274.75px;top:1.93px;font-size:16.5px;color:#444;letter-spacing:-0.065px;">Sheet4</span>
<span class="t" style="left:353.75px;top:1.93px;font-size:16.5px;color:#444;letter-spacing:0.025px;">Sheet5</span>
<span class="t" style="left:433.75px;top:1.93px;font-size:16.5px;color:#444;letter-spacing:-0.531px;">SUMIF_COUNTIF</span>
<span class="t" style="left:587.80px;top:1.93px;font-size:16.5px;color:#217346;letter-spacing:-0.012px;font-weight:bold;">ZeroBasedBudget</span>
<div class="a" style="left:104.0px;top:3px;width:1px;height:21px;background:#ababab"></div>
<div class="a" style="left:183.3px;top:3px;width:1px;height:21px;background:#ababab"></div>
<div class="a" style="left:262.0px;top:3px;width:1px;height:21px;background:#ababab"></div>
<div class="a" style="left:341.3px;top:3px;width:1px;height:21px;background:#ababab"></div>
<div class="a" style="left:420.0px;top:3px;width:1px;height:21px;background:#ababab"></div>
<div class="a" style="left:832px;top:4.5px;width:342px;height:18.5px;background:#f0f0f0"></div>
<div class="a" style="left:832px;top:4.5px;width:19.5px;height:18.5px;background:#fff;border:1px solid #ababab"></div>
<div class="a" style="left:851.5px;top:4.5px;width:280.5px;height:18.5px;background:#fff;border:1px solid #ababab"></div>
<div class="a" style="left:1155px;top:4.5px;width:19px;height:18.5px;background:#fff;border:1px solid #ababab"></div>
<svg style="left:0;top:0" width="1200" height="30" viewBox="0 644 1200 30" fill="none" stroke-linecap="round" stroke-linejoin="round">
<path d="M33.6 653V662L29 657.5Z" fill="#217346" stroke="none"/>
<path d="M58.2 653.4V661.6L62.4 657.5Z" fill="#b8b8b8" stroke="none"/>
<path d="M82.6 658.8h2.2v2h-2.2z M87.9 658.8h2.2v2h-2.2z M93.2 658.8h2.2v2h-2.2z" fill="#217346" stroke="none"/>
<circle cx="785" cy="657.6" r="9.2" stroke="#7a7a7a" stroke-width="1.3"/><path d="M779.8 657.6H790.2 M785 652.4V662.8" stroke="#7a7a7a" stroke-width="1.5"/>
<path d="M814.2 651.2h2.8v2.6h-2.8z M814.2 656.2h2.8v2.6h-2.8z M814.2 661.2h2.8v2.6h-2.8z" fill="#b0b0b0" stroke="none"/>
<path d="M842.6 653.4V661.8L837.6 657.6Z" fill="#111" stroke="none"/>
<path d="M1162.6 653.4V661.8L1167.6 657.6Z" fill="#111" stroke="none"/>
</svg>
</div>
<div id="status" class="a" style="left:0;top:672.5px;width:1200px;height:27.5px;background:#f3f2f1">
<div class="a" style="left:813px;top:0;width:49.5px;height:25.5px;background:#c8c6c4"></div>
<span class="t" style="left:10.18px;top:7.07px;font-size:13.5px;color:#444;letter-spacing:-0.594px;">Ready</span>
<span class="t" style="left:603.17px;top:7.07px;font-size:13.5px;color:#444;letter-spacing:-0.436px;">Count: 2</span>
<span class="t" style="left:696.38px;top:7.07px;font-size:13.5px;color:#444;letter-spacing:-0.288px;">Display Settings</span>
<span class="t" style="left:1143.00px;top:7.07px;font-size:13.5px;color:#444;letter-spacing:-1.067px;">100%</span>
<svg style="left:0;top:0" width="1200" height="27.5" viewBox="0 672.5 1200 27.5" fill="none" stroke-linecap="round" stroke-linejoin="round">
<path d="M72 679.4H88V682.6H72Z M72 682.6V693.4H78 M74.4 686H78.6 M74.4 689.2H77.4" stroke="#555" stroke-width="1.3" stroke-linejoin="miter"/>
<circle cx="83.6" cy="689.4" r="4.6" stroke="#555" stroke-width="1.3" fill="#f3f2f1"/><circle cx="83.6" cy="689.4" r="2.2" fill="#444" stroke="none"/>
<path d="M683 690.2H677V679.4H693V684.4" stroke="#555" stroke-width="1.3" stroke-linejoin="miter"/>
<circle cx="688.2" cy="689.8" r="2.6" stroke="#444" stroke-width="1.5"/><circle cx="688.2" cy="689.8" r="4.4" stroke="#444" stroke-width="1.6" stroke-dasharray="1.7 1.75" stroke-linecap="butt"/>
<path d="M830 678H845.4V692.8H830Z M835.2 678V692.8 M840.3 678V692.8 M830 683H845.4 M830 687.9H845.4" stroke="#444" stroke-width="1.3" stroke-linejoin="miter"/>
<path d="M879.6 678H896V692.8H879.6Z" stroke="#555" stroke-width="1.3" stroke-linejoin="miter"/><path d="M883.2 681.4H892.4V689.6H883.2Z M885.2 684H890.4 M885.2 686.8H890.4" stroke="#555" stroke-width="1.1" stroke-linejoin="miter"/>
<path d="M930 678H945.6V692.8H930Z M935.4 678V685.4H945.6 M940.4 678V685.4" stroke="#555" stroke-width="1.3" stroke-linejoin="miter"/>
<path d="M970.4 686H979.6 M986.5 686H1111 M1117.2 686H1126.4 M1121.8 681.4V690.6" stroke="#555" stroke-width="1.1" stroke-linecap="butt"/>
<rect x="1046.2" y="679.4" width="5.4" height="13.2" fill="#333" stroke="none"/>
</svg>
</div>
<div class="a" style="left:0;top:44px;width:1px;height:656px;background:#217346"></div><div class="a" style="left:1px;top:44px;width:1px;height:654px;background:rgba(33,115,70,0.22)"></div>
<div class="a" style="left:1198.4px;top:44px;width:1.6px;height:656px;background:#217346"></div>
<div class="a" style="left:0;top:697.6px;width:1200px;height:2.4px;background:#217346"></div>
</body></html>
